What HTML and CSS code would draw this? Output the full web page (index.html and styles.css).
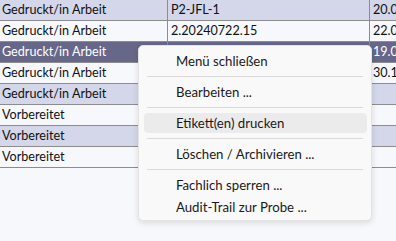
FILE: index.html
```html
<!DOCTYPE html>
<html lang="de">

<head>
    <meta charset="UTF-8">
    <meta name="viewport" content="width=device-width, initial-scale=1.0">
    <title>Proben</title>
    <link rel="stylesheet" href="styles.css">
</head>

<body>

    <div class="grid">
        <div class="row odd">
            <div class="cell status">Gedruckt/in Arbeit</div>
            <div class="cell code">P2-JFL-1</div>
            <div class="cell date">20.07.2024</div>
        </div>
        <div class="row">
            <div class="cell status">Gedruckt/in Arbeit</div>
            <div class="cell code">2.20240722.15</div>
            <div class="cell date">22.07.2024</div>
        </div>
        <div class="row selected">
            <div class="cell status">Gedruckt/in Arbeit</div>
            <div class="cell code"></div>
            <div class="cell date">19.07.2024</div>
        </div>
        <div class="row">
            <div class="cell status">Gedruckt/in Arbeit</div>
            <div class="cell code"></div>
            <div class="cell date">30.10.2024</div>
        </div>
        <div class="row odd">
            <div class="cell status">Gedruckt/in Arbeit</div>
            <div class="cell code"></div>
            <div class="cell date"></div>
        </div>
        <div class="row">
            <div class="cell status">Vorbereitet</div>
            <div class="cell code"></div>
            <div class="cell date"></div>
        </div>
        <div class="row odd">
            <div class="cell status">Vorbereitet</div>
            <div class="cell code"></div>
            <div class="cell date"></div>
        </div>
        <div class="row">
            <div class="cell status">Vorbereitet</div>
            <div class="cell code"></div>
            <div class="cell date"></div>
        </div>
    </div>

    <div class="context-menu">
        <div class="item">Menü schließen</div>
        <div class="sep"></div>
        <div class="item">Bearbeiten ...</div>
        <div class="sep"></div>
        <div class="item hover">Etikett(en) drucken</div>
        <div class="sep"></div>
        <div class="item">Löschen / Archivieren ...</div>
        <div class="sep"></div>
        <div class="item">Fachlich sperren ...</div>
        <div class="item">Audit-Trail zur Probe ...</div>
    </div>

</body>

</html>
```

FILE: styles.css
```css
body {
    margin: 0;
    padding: 0;
    background-color: #f7f8fb;
    font-family: Lato, "Noto Sans", sans-serif;
    font-size: 12.6px;
    color: #111;
    width: 396px;
    height: 241px;
    overflow: hidden;
    position: relative;
}

.grid {
    display: flex;
    flex-direction: column;
    width: 440px;
}

.row {
    display: flex;
    height: 20px;
    line-height: 20px;
    border-bottom: 1px solid #8c8c8c;
    background-color: #f7f8fb;
}

.row.odd {
    background-color: #d3d7e9;
}

.row.selected {
    background-color: #67678a;
    color: #fff;
}

.cell {
    white-space: nowrap;
    overflow: hidden;
}

.status {
    width: 165px;
    padding-left: 2px;
    border-right: 1px solid #8c8c8c;
}

.code {
    width: 198px;
    padding-left: 3px;
    border-right: 1px solid #8c8c8c;
}

.date {
    flex: 1;
    padding-left: 3px;
}

.context-menu {
    position: absolute;
    left: 138px;
    top: 45px;
    width: 232px;
    display: flex;
    flex-direction: column;
    padding: 4px 0 2px;
    background-color: #f9f9f9;
    border: 1px solid #e3e3e3;
    border-radius: 5px;
    box-shadow: 0 2px 6px rgba(0, 0, 0, 0.12);
    font-size: 13.2px;
    color: #1a1a1a;
}

.item {
    height: 20px;
    line-height: 20px;
    margin: 1px 4px 1px 5px;
    padding-left: 32px;
    border-radius: 4px;
}

.item.hover {
    background-color: #ebebeb;
}

.sep {
    height: 1px;
    margin: 4px 8px 4px 8px;
    background-color: #d9d9d9;
}
```
